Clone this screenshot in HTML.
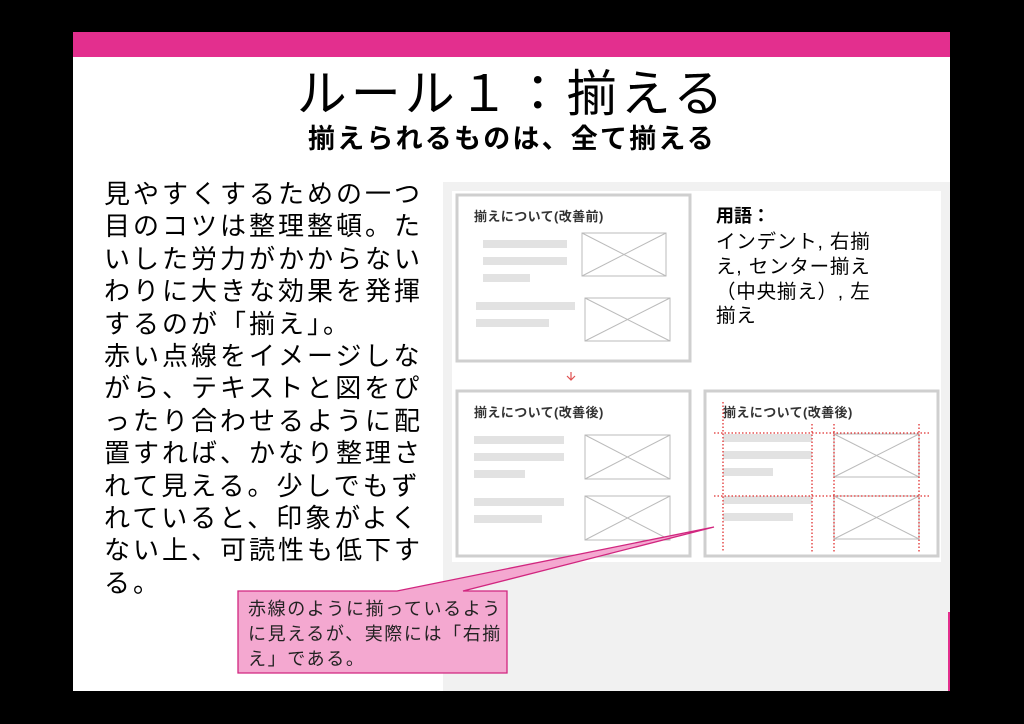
<!DOCTYPE html>
<html><head><meta charset="utf-8"><style>
body{margin:0;width:1024px;height:724px;background:#000;overflow:hidden;position:relative;font-family:"Liberation Sans","Noto Sans CJK JP",sans-serif;}
.slide{position:absolute;left:73px;top:32px;width:877px;height:659px;background:#fff;}
.bar{position:absolute;left:73px;top:32px;width:877px;height:25px;background:#e32f8e;}
.t{position:absolute;left:0;width:1024px;text-align:center;color:#000;white-space:nowrap;}
.body{position:absolute;left:104px;top:178px;width:340px;font-size:26px;letter-spacing:3px;line-height:32.4px;color:#000;}
.body div{white-space:nowrap;}
</style></head><body>
<div class="slide"></div>
<div class="bar"></div>
<div class="t" style="top:63px;font-size:50px;letter-spacing:4px;line-height:62px;">ルール１：揃える</div>
<div class="t" style="top:121px;font-size:27px;letter-spacing:2.2px;font-weight:bold;line-height:36px;">揃えられるものは、全て揃える</div>
<div class="body">
<div>見やすくするための一つ</div><div>目のコツは整理整頓。た</div><div>いした労力がかからない</div><div>わりに大きな効果を発揮</div><div>するのが「揃え」。</div><div>赤い点線をイメージしな</div><div>がら、テキストと図をぴ</div><div>ったり合わせるように配</div><div>置すれば、かなり整理さ</div><div>れて見える。少しでもず</div><div>れていると、印象がよく</div><div>ない上、可読性も低下す</div><div>る。</div>
</div>
<svg width="1024" height="724" style="position:absolute;left:0;top:0" font-family="Liberation Sans, Noto Sans CJK JP, sans-serif">
<rect x="443" y="182" width="507" height="509" fill="#f1f1f1"/>
<rect x="452" y="191" width="489" height="371" fill="#fff"/>
<rect x="948" y="612" width="2" height="79" fill="#e32f8e"/>
<g fill="#fff" stroke="#cfcfcf" stroke-width="3">
<rect x="457" y="195" width="233" height="166"/>
<rect x="457" y="391" width="233" height="165"/>
<rect x="705" y="391" width="233" height="165"/>
</g>
<g font-size="13" fill="#333" font-weight="bold" letter-spacing="0.4">
<text x="474" y="221">揃えについて(改善前)</text>
<text x="474" y="417">揃えについて(改善後)</text>
<text x="723" y="417">揃えについて(改善後)</text>
</g>
<g fill="#e2e2e2">
<rect x="483" y="240" width="84" height="8"/><rect x="483" y="257" width="84" height="8"/><rect x="483" y="274" width="47" height="8"/>
<rect x="476" y="302" width="99" height="8"/><rect x="476" y="319" width="73" height="8"/>
<rect x="474" y="436" width="90" height="8"/><rect x="474" y="453" width="90" height="8"/><rect x="474" y="470" width="51" height="8"/>
<rect x="474" y="498" width="90" height="8"/><rect x="474" y="515" width="68" height="8"/>
<rect x="723" y="434" width="89" height="8"/><rect x="723" y="451" width="89" height="8"/><rect x="723" y="468" width="50" height="8"/>
<rect x="723" y="496" width="89" height="8"/><rect x="723" y="513" width="70" height="8"/>
</g>
<g fill="none" stroke="#bbb" stroke-width="1">
<rect x="582" y="233" width="84" height="43"/><path d="M582 233L666 276M666 233L582 276"/>
<rect x="585" y="298" width="85" height="43"/><path d="M585 298L670 341M670 298L585 341"/>
<rect x="585" y="435" width="85" height="44"/><path d="M585 435L670 479M670 435L585 479"/>
<rect x="585" y="496" width="85" height="44"/><path d="M585 496L670 540M670 496L585 540"/>
<rect x="834" y="434" width="85" height="43"/><path d="M834 434L919 477M919 434L834 477"/>
<rect x="834" y="496" width="85" height="43"/><path d="M834 496L919 539M919 496L834 539"/>
</g>
<g stroke="#e03030" stroke-width="1.3" stroke-dasharray="1.5 2" fill="none">
<path d="M714 433H929M714 496H929M723 402V552M812 424V552M834 424V552M919 424V552"/>
</g>
<path d="M571 372v8M567 376l4 4 4-4" stroke="#e05050" fill="none" stroke-width="1.2"/>
<text x="716" y="222" font-size="18" font-weight="bold">用語：</text>
<g font-size="19.5" letter-spacing="0.8">
<text x="716" y="248">インデント, 右揃</text>
<text x="716" y="273">え, センター揃え</text>
<text x="716" y="298">（中央揃え）, 左</text>
<text x="716" y="322">揃え</text>
</g>
<path d="M238 591H397L714 527L463 591H507V673H238Z" fill="#f4a8d0" stroke="#d1267f" stroke-width="1.3"/>
<g font-size="18" fill="#222" letter-spacing="1.6">
<text x="248" y="615">赤線のように揃っているよう</text>
<text x="248" y="640">に見えるが、実際には「右揃</text>
<text x="248" y="665">え」である。</text>
</g>
</svg>
</body></html>
